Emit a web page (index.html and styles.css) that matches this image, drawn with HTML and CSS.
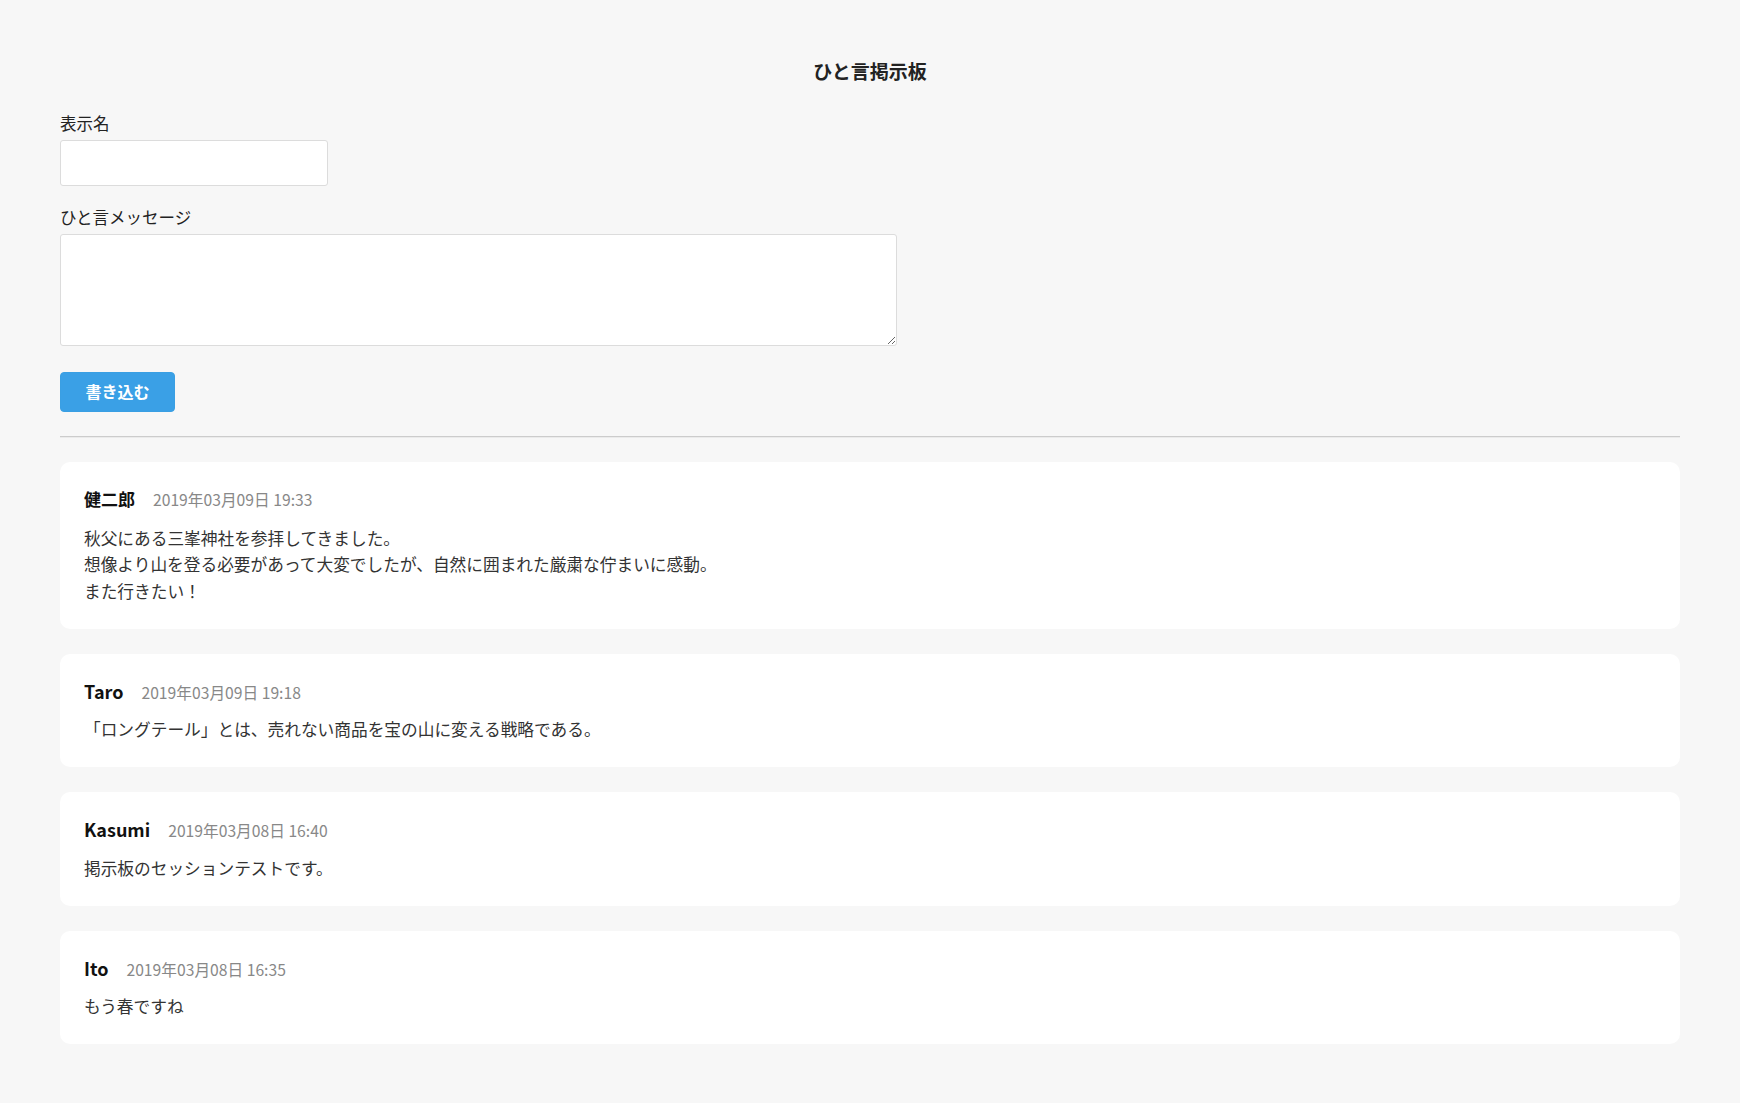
FILE: index.html
```html
<!DOCTYPE html>
<html lang="ja">
<head>
<meta charset="utf-8">
<title>ひと言掲示板</title>
<link rel="stylesheet" href="styles.css">
</head>
<body>
<div class="page">
  <h1 class="title">ひと言掲示板</h1>
  <form class="post-form">
    <label class="field-label" for="name">表示名</label>
    <input class="name-input" id="name" type="text">
    <label class="field-label second" for="message">ひと言メッセージ</label>
    <textarea class="message-input" id="message"></textarea>
    <button class="submit-btn" type="button">書き込む</button>
  </form>
  <hr class="divider">
  <section class="posts">
    <article class="post">
      <div class="post-head"><span class="post-name jp">健二郎</span><span class="post-date">2019年03月09日 19:33</span></div>
      <p class="post-body">秋父にある三峯神社を参拝してきました。<br>想像より山を登る必要があって大変でしたが、自然に囲まれた厳粛な佇まいに感動。<br>また行きたい！</p>
    </article>
    <article class="post">
      <div class="post-head"><span class="post-name">Taro</span><span class="post-date">2019年03月09日 19:18</span></div>
      <p class="post-body">「ロングテール」とは、売れない商品を宝の山に変える戦略である。</p>
    </article>
    <article class="post">
      <div class="post-head"><span class="post-name">Kasumi</span><span class="post-date">2019年03月08日 16:40</span></div>
      <p class="post-body">掲示板のセッションテストです。</p>
    </article>
    <article class="post">
      <div class="post-head"><span class="post-name">Ito</span><span class="post-date">2019年03月08日 16:35</span></div>
      <p class="post-body">もう春ですね</p>
    </article>
  </section>
</div>
</body>
</html>
```
FILE: styles.css
```css
html, body {
  margin: 0;
  padding: 0;
  background: #f7f7f7;
}
body {
  font-family: "Noto Sans CJK JP", "Noto Sans", sans-serif;
  color: #333;
  font-size: 16px;
}
.page {
  padding: 57px 60px 40px 60px;
}
.title {
  margin: 0;
  text-align: center;
  font-size: 19px;
  line-height: 28px;
  font-weight: bold;
  color: #222;
}
.post-form {
  display: flex;
  flex-direction: column;
  align-items: flex-start;
  margin-top: 26px;
}
.field-label {
  font-size: 16.5px;
  line-height: 24px;
  color: #222;
  margin-bottom: 5px;
}
.field-label.second {
  margin-top: 19px;
}
.name-input {
  box-sizing: border-box;
  width: 268px;
  height: 46px;
  border: 1px solid #dcdcdc;
  border-radius: 3px;
  background: #fff;
  margin: 0;
  padding: 0 10px;
  font-size: 16px;
}
.message-input {
  box-sizing: border-box;
  width: 837px;
  height: 112px;
  border: 1px solid #dcdcdc;
  border-radius: 3px;
  background: #fff;
  margin: 0;
  padding: 8px 10px;
  font-family: inherit;
  font-size: 16px;
}
.submit-btn {
  margin-top: 26px;
  box-sizing: border-box;
  width: 115px;
  height: 40px;
  border: 1px solid #3a9fe3;
  border-radius: 4px;
  background: #3aa0e6;
  color: #fff;
  font-family: inherit;
  font-weight: bold;
  font-size: 16px;
  line-height: 20px;
  padding: 0 0 3px 0;
  cursor: pointer;
}
.divider {
  margin: 24px 0 24px 0;
  border: 0;
  border-top: 1px solid #cccccc;
  border-bottom: 1px solid #ebebeb;
  height: 0;
}
.posts {
  display: flex;
  flex-direction: column;
  gap: 25px;
}
.post {
  background: #fff;
  border-radius: 10px;
  padding: 24px 24px 24.5px 24px;
}
.post-head {
  display: flex;
  align-items: baseline;
  height: 26px;
  line-height: 26px;
  margin-bottom: 12.5px;
}
.post-name {
  font-size: 18px;
  font-weight: bold;
  color: #111;
}
.post-name.jp {
  font-size: 17px;
}
.post-date {
  margin-left: 18px;
  font-size: 15.7px;
  color: #888;
}
.post-body {
  margin: 0;
  font-size: 16.7px;
  line-height: 26.5px;
  color: #333;
}
```
